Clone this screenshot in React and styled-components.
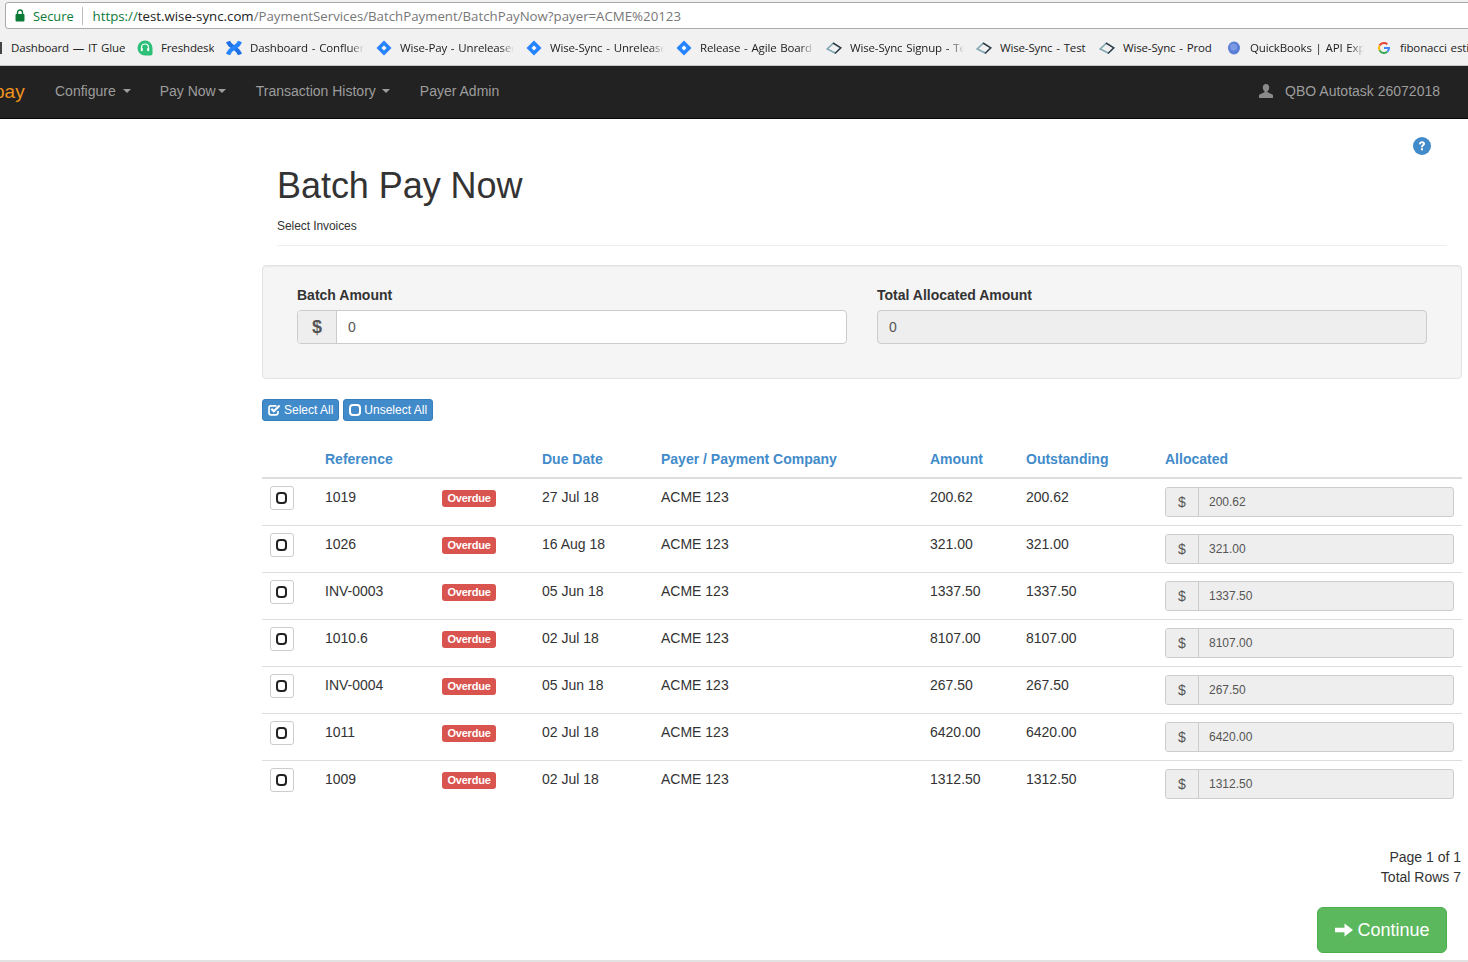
import React from "react";
import styled, { createGlobalStyle } from "styled-components";

const Global = createGlobalStyle`
  html, body { margin: 0; padding: 0; background: #fff; }
  body { font-family: "Liberation Sans", Arial, sans-serif; font-size: 14px; color: #333; overflow: hidden; }
  * { box-sizing: border-box; }
`;

const Page = styled.div`
  width: 1468px; height: 962px; overflow: hidden; display: flex; flex-direction: column;
  border-bottom: 2px solid #e2e2e2;
`;
const TopBar = styled.div`
  height: 30px; background: #f1f1f1; padding: 2px 0 1px 5px; flex: none;
`;
const UrlBox = styled.div`
  width: 1480px; height: 27px; background: #fff; border: 1px solid #aaa; border-radius: 3px;
  display: flex; align-items: center; padding-left: 9px;
  font-family: "Open Sans", sans-serif; font-size: 13.25px; white-space: nowrap;
`;
const SecureText = styled.span`
  color: #0b7a36; margin-left: 8px; font-size: 12.8px; padding-right: 8px; border-right: 1px solid #bbb; line-height: 18px; margin-right: 10px;
`;
const UrlScheme = styled.span`color: #0b7a36;`;
const UrlHost = styled.span`color: #222;`;
const UrlPath = styled.span`color: #777;`;

const Bookmarks = styled.div`
  height: 36px; background: #f1f1f1; border-bottom: 1px solid #c4c4c4; flex: none;
  display: flex; align-items: center; padding-left: 11px; gap: 12px; overflow: hidden;
`;
const Sliver = styled.span`
  width: 2px; height: 12px; background: #444; margin-left: -11px; margin-right: -3px; flex: none;
`;
const Bookmark = styled.div`
  display: flex; align-items: center; gap: 8px; flex: none;
  svg { flex: none; display: block; }
`;
const BookmarkLabel = styled.span`
  display: block; flex: none; width: ${p => p.$w}px; overflow: hidden; white-space: nowrap;
  font-family: "Open Sans", sans-serif; font-size: 11.5px; letter-spacing: -0.15px; word-spacing: 1px; color: #222; line-height: 16px;
  ${p => p.$fade ? "mask-image: linear-gradient(to right, #000 88%, transparent 100%);" : ""}
`;

const Navbar = styled.nav`
  height: 53px; background: #222; border-bottom: 1px solid #080808; flex: none;
  display: flex; align-items: center; color: #9d9d9d; padding-bottom: 3px;
`;
const Brand = styled.span`
  color: #f0921e; font-size: 19px; margin-left: -6px; width: 61px; flex: none; position: relative; top: 1px;
`;
const NavItem = styled.span`
  display: inline-flex; align-items: center; margin-right: ${p => p.$mr}px; white-space: nowrap;
`;
const Caret = styled.i`
  display: inline-block; width: 0; height: 0; margin-left: ${p => p.$ml || 6}px;
  border-top: 4px solid #9d9d9d; border-left: 4px solid transparent; border-right: 4px solid transparent;
`;
const NavRight = styled.div`
  margin-left: auto; margin-right: 28px; display: flex; align-items: center; gap: 12px;
`;

const Content = styled.main`
  width: 1200px; margin-left: 262px; flex: 1; display: flex; flex-direction: column;
`;
const HelpRow = styled.div`
  display: flex; justify-content: flex-end; padding: 18px 31px 0 0; height: 36px;
`;
const Header = styled.header`
  margin: 11px 15px 19px; border-bottom: 1px solid #eee; height: 80px;
`;
const Title = styled.h1`
  margin: 0; font-size: 36px; font-weight: 400; line-height: 40px; color: #333; letter-spacing: -0.05px;
`;
const Subtitle = styled.p`
  margin: 12px 0 0; font-size: 12px; line-height: 17px; color: #333; letter-spacing: -0.07px;
`;
const Well = styled.section`
  background: #f5f5f5; border: 1px solid #e3e3e3; border-radius: 4px; padding: 19px 34px 34px;
  display: grid; grid-template-columns: 550px 550px; column-gap: 30px;
  box-shadow: inset 0 1px 1px rgba(0,0,0,.05);
`;
const Label = styled.label`
  display: block; font-weight: 700; line-height: 20px; margin-bottom: 5px; color: #333;
`;
const InputGroup = styled.div`
  display: flex; height: ${p => p.$small ? 30 : 34}px; background: ${p => p.$disabled ? "#eee" : "#fff"};
  border: 1px solid #ccc; border-radius: ${p => p.$small ? 3 : 4}px; overflow: hidden; color: #555;
  font-size: ${p => p.$small ? 12 : 14}px; width: ${p => p.$small ? "289px" : "auto"};
`;
const Addon = styled.span`
  width: ${p => p.$small ? 33 : 39}px; flex: none; display: flex; align-items: center; justify-content: center;
  background: #eee; border-right: 1px solid #ccc; color: #555; font-size: ${p => p.$small ? 14 : 18}px;
  font-weight: ${p => p.$small ? 400 : 700};
`;
const InputValue = styled.span`
  flex: 1; display: flex; align-items: center; padding-left: ${p => p.$pl || 11}px; color: #555;
`;

const Actions = styled.div`
  display: flex; gap: 4px; margin: 20px 0;
`;
const ActionButton = styled.button`
  height: 22px; padding: 0 5px; background: #428bca; border: 1px solid #357ebd; border-radius: 3px; color: #fff;
  font: 12px/20px "Liberation Sans", Arial, sans-serif; display: inline-flex; align-items: center; gap: 3px;
`;

const Table = styled.table`
  width: 1200px; border-collapse: collapse; table-layout: fixed;
`;
const Th = styled.th`
  text-align: left; color: #428bca; font-weight: 700; font-size: 14px; line-height: 20px;
  padding: 8px; border-bottom: 2px solid #ddd;
`;
const Td = styled.td`
  padding: 8px; line-height: 20px; vertical-align: top; border-bottom: 1px solid #ddd; color: #333;
  tr:last-child > & { border-bottom: 0; }
`;
const CheckButton = styled.button`
  width: 24px; height: 24px; padding: 0 2px 1px 0; margin: -1px 0 0; background: #fff; border: 1px solid #ccc; border-radius: 3px;
  display: flex; align-items: center; justify-content: center;
`;
const Overdue = styled.span`
  display: block; width: 54px; height: 17px; margin-top: 3px; background: #d9534f; color: #fff; border-radius: 3px;
  font-size: 11px; font-weight: 700; line-height: 17px; text-align: center; letter-spacing: -0.2px;
`;

const Footer = styled.div`
  margin-top: 40px; text-align: right; line-height: 20px; padding-right: 1px;
`;
const FooterAction = styled.div`
  display: flex; justify-content: flex-end; padding: 20px 15px 0 0;
`;
const ContinueButton = styled.button`
  width: 130px; height: 46px; padding: 0; background: #5cb85c; border: 1px solid #4cae4c; border-radius: 6px; color: #fff;
  font: 18px/24px "Liberation Sans", Arial, sans-serif; display: inline-flex; align-items: center; justify-content: center; gap: 3px;
`;

const SquareO = ({ color = "#222", w = 11, h = 12 }) => (
  <svg width={w} height={h} viewBox={`0 0 ${w} ${h}`}><rect x="1" y="1" width={w - 2} height={h - 2} rx="3" fill="none" stroke={color} strokeWidth="2" /></svg>
);
const CheckSquare = () => (
  <svg width="13" height="12" viewBox="0 0 13 12">
    <path d="M10 7v1.600A2 2 0 0 1 8 10.800H3A2 2 0 0 1 1 8.800V3.800A2 2 0 0 1 3 1.800H8.500" fill="none" stroke="#fff" strokeWidth="1.700" />
    <path d="M3.300 4.800l2.500 2.500L11.600 1.500" fill="none" stroke="#fff" strokeWidth="2.100" />
  </svg>
);
const Lock = () => (
  <svg width="10" height="13" viewBox="0 0 10 13"><path d="M2.500 5V3.500a2.500 2.500 0 0 1 5 0V5" fill="none" stroke="#0b7a36" strokeWidth="1.400" /><rect x="0.500" y="5" width="9" height="7.500" rx="1" fill="#0b7a36" /></svg>
);
const Freshdesk = () => (
  <svg width="16" height="16" viewBox="0 0 16 16"><path d="M8 0.500a7.500 7.500 0 0 1 7.500 7.500v5.500a2 2 0 0 1-2 2H8A7.500 7.500 0 0 1 8 .500z" fill="#2bbf77" /><path d="M4.500 9V7.500a3.500 3.500 0 0 1 7 0V9" fill="none" stroke="#fff" strokeWidth="1.200" /><rect x="3.800" y="8" width="2" height="3.200" rx=".8" fill="#fff" /><rect x="10.200" y="8" width="2" height="3.200" rx=".8" fill="#fff" /></svg>
);
const Confluence = () => (
  <svg width="16" height="16" viewBox="0 0 16 16">
    <path d="M2 1.500C3.500 5.500 6.500 6.800 8.500 8c2.500 1.600 4.500 3.500 5.500 6.500" fill="none" stroke="#1f6fe5" strokeWidth="4.200" />
    <path d="M14 1.500C12.500 5.500 9.500 6.800 7.500 8c-2.500 1.600-4.500 3.500-5.500 6.500" fill="none" stroke="#2684ff" strokeWidth="4.200" />
  </svg>
);
const Jira = () => (
  <svg width="16" height="16" viewBox="0 0 16 16"><path d="M8 0.500L15.500 8 8 15.500 0.500 8z" fill="#2684ff" /><path d="M8 5.500L10.500 8 8 10.500 5.500 8z" fill="#fff" /></svg>
);
const Diamond = () => (
  <svg width="16" height="16" viewBox="0 0 16 16"><path d="M7.500 3L1.200 9l8 4" fill="none" stroke="#7fa6b3" strokeWidth="1.600" /><path d="M7 3l7.800 4.800L9 13.500" fill="none" stroke="#2b3b45" strokeWidth="1.500" /></svg>
);
const Quickbooks = () => (
  <svg width="16" height="16" viewBox="0 0 16 16"><ellipse cx="8" cy="8" rx="6" ry="6.500" fill="#5b7fd6" /><ellipse cx="7.500" cy="7" rx="3.500" ry="3.500" fill="#7b9ae4" /></svg>
);
const GoogleG = () => (
  <svg width="16" height="16" viewBox="0 0 16 16">
    <path d="M8 3a5 5 0 0 1 3.300 1.200" fill="none" stroke="#ea4335" strokeWidth="2" />
    <path d="M3.600 5.600A5 5 0 0 1 8 3" fill="none" stroke="#ea4335" strokeWidth="2" />
    <path d="M3.600 10.400a5 5 0 0 1 0-4.800" fill="none" stroke="#fbbc05" strokeWidth="2" />
    <path d="M11.500 11.600A5 5 0 0 1 3.600 10.400" fill="none" stroke="#34a853" strokeWidth="2" />
    <path d="M8 8h5a5 5 0 0 1-1.500 3.600" fill="none" stroke="#4285f4" strokeWidth="2" />
  </svg>
);
const UserIcon = () => (
  <svg width="14" height="14" viewBox="0 0 14 14"><path d="M7 0c2 0 3.200 1.400 3.200 3.600 0 1.600-.7 3-1.700 3.700v1l4.500 2c.7.300 1 .8 1 1.400V14H0v-2.300c0-.6.300-1.100 1-1.400l4.500-2v-1C4.500 6.600 3.800 5.200 3.800 3.600 3.800 1.400 5 0 7 0z" fill="#8a8a8a" /></svg>
);
const HelpIcon = () => (
  <svg width="18" height="18" viewBox="0 0 18 18">
    <circle cx="9" cy="9" r="9" fill="#428bca" />
    <path d="M6 7.200C6 5.400 7.300 4.300 9 4.300c1.800 0 3 1 3 2.500 0 1.200-.7 1.700-1.400 2.200-.5.300-.7.600-.7 1.200H7.900c0-1.200.4-1.800 1.100-2.300.5-.4.900-.6.900-1.100 0-.4-.4-.7-.9-.7-.6 0-1 .4-1 1.100z" fill="#fff" />
    <rect x="7.900" y="11.200" width="2.100" height="2.100" fill="#fff" />
  </svg>
);
const ArrowRight = () => (
  <svg width="20" height="16" viewBox="0 0 20 16"><path d="M1 5.800h9.500V1.500L19 8l-8.500 6.500v-4.300H1z" fill="#fff" /></svg>
);

const marks = [
  { I: Freshdesk, t: "Freshdesk", w: 53 },
  { I: Confluence, t: "Dashboard - Confluence", w: 114, f: 1 },
  { I: Jira, t: "Wise-Pay - Unreleased", w: 114, f: 1 },
  { I: Jira, t: "Wise-Sync - Unreleased", w: 114, f: 1 },
  { I: Jira, t: "Release - Agile Board", w: 114, f: 1 },
  { I: Diamond, t: "Wise-Sync Signup - Test", w: 114, f: 1 },
  { I: Diamond, t: "Wise-Sync - Test", w: 87 },
  { I: Diamond, t: "Wise-Sync - Prod", w: 91 },
  { I: Quickbooks, t: "QuickBooks | API Explorer", w: 114, f: 1 },
  { I: GoogleG, t: "fibonacci estimation", w: 114 },
];

const rows = [
  ["1019", "27 Jul 18", "200.62"],
  ["1026", "16 Aug 18", "321.00"],
  ["INV-0003", "05 Jun 18", "1337.50"],
  ["1010.6", "02 Jul 18", "8107.00"],
  ["INV-0004", "05 Jun 18", "267.50"],
  ["1011", "02 Jul 18", "6420.00"],
  ["1009", "02 Jul 18", "1312.50"],
];

export default function App() {
  return (
    <Page>
      <Global />
      <TopBar>
        <UrlBox>
          <Lock />
          <SecureText>Secure</SecureText>
          <UrlScheme>https://</UrlScheme><UrlHost>test.wise-sync.com</UrlHost><UrlPath>/PaymentServices/BatchPayment/BatchPayNow?payer=ACME%20123</UrlPath>
        </UrlBox>
      </TopBar>
      <Bookmarks>
        <Sliver />
        <BookmarkLabel $w={114}>Dashboard — IT Glue</BookmarkLabel>
        {marks.map(({ I, t, w, f }) => (
          <Bookmark key={t}><I /><BookmarkLabel $w={w} $fade={f}>{t}</BookmarkLabel></Bookmark>
        ))}
      </Bookmarks>
      <Navbar>
        <Brand>pay</Brand>
        <NavItem $mr={29}>Configure<Caret $ml={7} /></NavItem>
        <NavItem $mr={30}>Pay Now<Caret $ml={2} /></NavItem>
        <NavItem $mr={30}>Transaction History<Caret $ml={6} /></NavItem>
        <NavItem $mr={0}>Payer Admin</NavItem>
        <NavRight><UserIcon />QBO Autotask 26072018</NavRight>
      </Navbar>
      <Content>
        <HelpRow><HelpIcon /></HelpRow>
        <Header>
          <Title>Batch Pay Now</Title>
          <Subtitle>Select Invoices</Subtitle>
        </Header>
        <Well>
          <div>
            <Label>Batch Amount</Label>
            <InputGroup><Addon>$</Addon><InputValue>0</InputValue></InputGroup>
          </div>
          <div>
            <Label>Total Allocated Amount</Label>
            <InputGroup $disabled><InputValue>0</InputValue></InputGroup>
          </div>
        </Well>
        <Actions>
          <ActionButton><CheckSquare />Select All</ActionButton>
          <ActionButton><SquareO color="#fff" w={12} h={12} />Unselect All</ActionButton>
        </Actions>
        <Table>
          <colgroup>
            {[55, 117, 100, 119, 269, 96, 139, 305].map((w, i) => <col key={i} width={w} />)}
          </colgroup>
          <thead>
            <tr>
              <Th /><Th>Reference</Th><Th /><Th>Due Date</Th><Th>Payer / Payment Company</Th><Th>Amount</Th><Th>Outstanding</Th><Th>Allocated</Th>
            </tr>
          </thead>
          <tbody>
            {rows.map(([ref, due, amt]) => (
              <tr key={ref}>
                <Td><CheckButton><SquareO /></CheckButton></Td>
                <Td>{ref}</Td>
                <Td><Overdue>Overdue</Overdue></Td>
                <Td>{due}</Td>
                <Td>ACME 123</Td>
                <Td>{amt}</Td>
                <Td>{amt}</Td>
                <Td>
                  <InputGroup $small $disabled><Addon $small>$</Addon><InputValue $pl={10}>{amt}</InputValue></InputGroup>
                </Td>
              </tr>
            ))}
          </tbody>
        </Table>
        <Footer>Page 1 of 1<br />Total Rows 7</Footer>
        <FooterAction>
          <ContinueButton><ArrowRight />Continue</ContinueButton>
        </FooterAction>
      </Content>
    </Page>
  );
}
